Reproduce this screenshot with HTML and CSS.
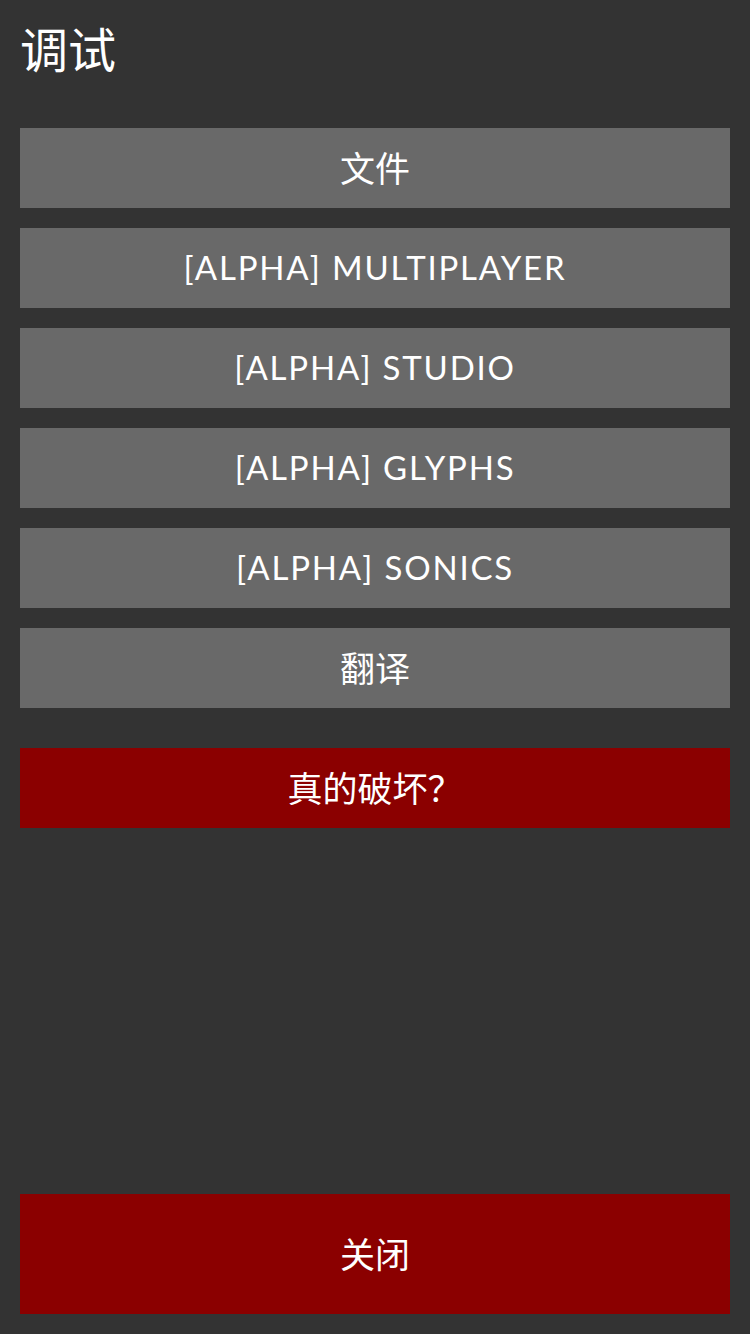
FILE: index.html
```html
<!DOCTYPE html>
<html lang="zh">
<head>
<meta charset="utf-8">
<title>调试</title>
<link rel="stylesheet" href="styles.css">
</head>
<body>
<div class="screen">
  <h1 class="title">调试</h1>
  <div class="menu">
    <div class="btn">文件</div>
    <div class="btn btn-latin">[ALPHA] MULTIPLAYER</div>
    <div class="btn btn-latin">[ALPHA] STUDIO</div>
    <div class="btn btn-latin">[ALPHA] GLYPHS</div>
    <div class="btn btn-latin">[ALPHA] SONICS</div>
    <div class="btn">翻译</div>
  </div>
  <div class="btn btn-danger">真的破坏？</div>
  <div class="btn btn-danger btn-close">关闭</div>
</div>
</body>
</html>
```
FILE: styles.css
```css
html, body {
  margin: 0;
  padding: 0;
  background: #333333;
}
body {
  font-family: "Lato", "Noto Sans CJK SC", sans-serif;
  color: #ffffff;
}
.screen {
  box-sizing: border-box;
  height: 1334px;
  padding: 20px;
  display: flex;
  flex-direction: column;
}
.title {
  margin: 0 0 48px 0;
  font-size: 48px;
  font-weight: 400;
  line-height: 60px;
  height: 60px;
}
.menu {
  display: flex;
  flex-direction: column;
  gap: 20px;
}
.btn {
  height: 80px;
  background: #696969;
  display: flex;
  align-items: center;
  justify-content: center;
  font-size: 35px;
  font-weight: 400;
  line-height: 1;
}
.btn-latin {
  box-sizing: border-box;
  font-size: 33px;
  letter-spacing: 1.8px;
  padding-bottom: 1px;
}
.btn-danger {
  background: #8b0000;
  margin-top: 40px;
}
.btn-close {
  margin-top: auto;
  height: 120px;
}
```
